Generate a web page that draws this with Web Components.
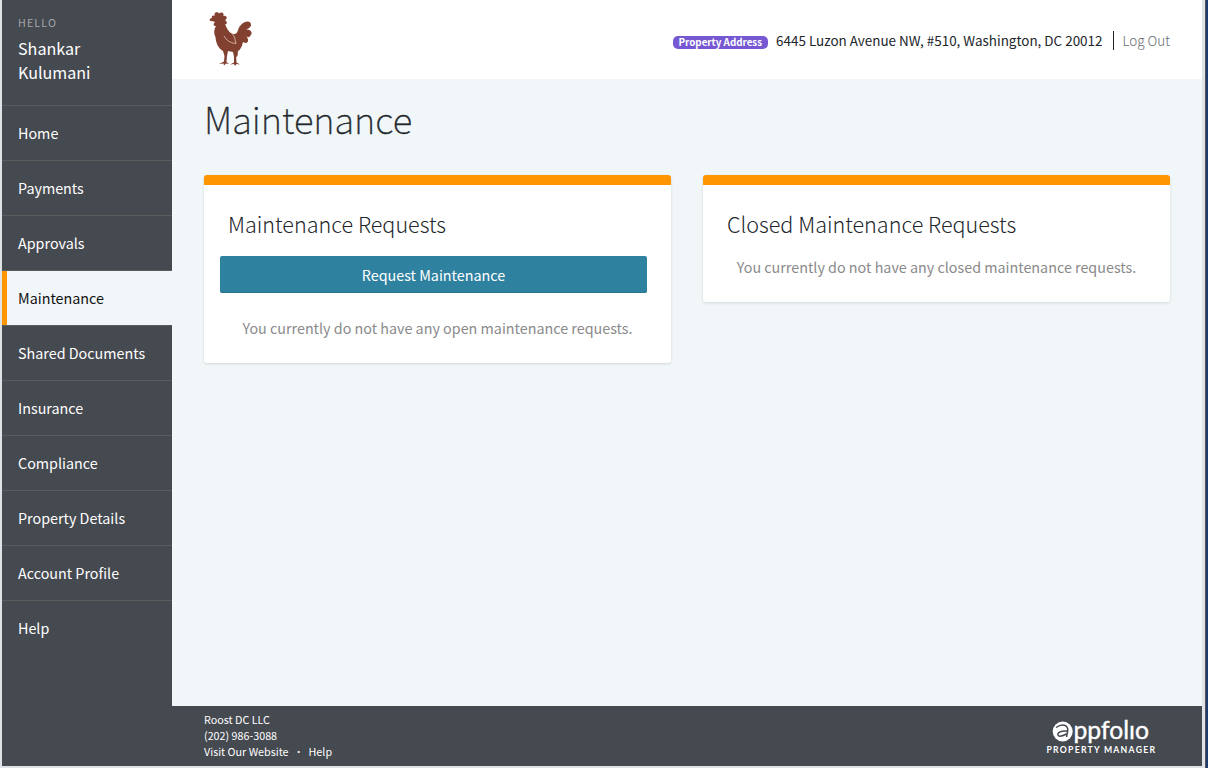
<!DOCTYPE html>
<html lang="en">
<head>
<meta charset="utf-8">
<title>Maintenance</title>
<style>
html,body{margin:0;height:100%}
body{background:#dfe3e6;font-family:"Noto Sans CJK SC","Noto Sans",sans-serif;overflow:hidden;color:#22262b}
</style>
</head>
<body>
<portal-app></portal-app>
<script>
const define = (name, html) => {
  const t = document.createElement('template');
  t.innerHTML = html;
  customElements.define(name, class extends HTMLElement {
    constructor() {
      super();
      this.attachShadow({ mode: 'open' }).appendChild(t.content.cloneNode(true));
    }
  });
};

define('nav-item', `
<style>
:host{display:flex;align-items:center;box-sizing:border-box;height:55px;padding:0 0 0 16px;border-top:1px solid #5b5b5c;color:#fff;font-size:14.33px;line-height:24px;white-space:nowrap}
:host([active]){background:linear-gradient(90deg,#ff9500 5px,#f1f6f9 5px);color:#111}
</style><slot></slot>`);

define('side-nav', `
<style>
:host{display:flex;flex-direction:column;width:170px;background:#454950;color:#fff}
header{height:105px;box-sizing:border-box;padding:15px 16px 0}
small{display:block;font-size:10.75px;line-height:16px;letter-spacing:1.1px;color:#a3a4a5}
.name{font-size:16.12px;line-height:24px;margin-top:5px;width:100px}
</style>
<header><small>HELLO</small><div class="name">Shankar Kulumani</div></header>
<nav>
<nav-item>Home</nav-item><nav-item>Payments</nav-item><nav-item>Approvals</nav-item><nav-item active>Maintenance</nav-item><nav-item>Shared Documents</nav-item><nav-item>Insurance</nav-item><nav-item>Compliance</nav-item><nav-item>Property Details</nav-item><nav-item>Account Profile</nav-item><nav-item>Help</nav-item>
</nav>`);

define('rooster-logo', `
<style>:host{display:block;width:50px;height:60px}svg{display:block}</style>
<svg width="50" height="60" viewBox="0 0 50 60" aria-hidden="true">
<path fill="#824031" d="M7 13C4 14 4 10 7 10C6 8 8 7 10 8C8 4 13 3 14 5.500C17 3 20 6 18 8C22 7 23 11 20 12C23 14 22 17 20 16C22 20 23 24 28 26C34 27 32 20 36 17C39 13 46 12 46 17C46 19 43 21 40 22C45 20 49 25 45 28C44 30 42 29 41 28C45 32 43 37 38 34C37 39 35 42 33 43L32.500 48L31.200 49L31.500 54.500L35 56.500L31.500 56L30 58L29 56L25 56.500L29 54.500L29 49L28 44L23 43L22 48L21.500 54L24 56L21 55.500L19 57.500L18.500 55.500L14 56L19 53.500L19.500 48L18 43C13 40 11 35 10.500 29C9 26 8.500 22 11 18C8 18 8 16 10 14Z"/>
<path d="M19 28C21 32 25 35 31 35.500C30 32 30 29 27 25" fill="none" stroke="#dfc4b8" stroke-width=".8"/>
</svg>`);

define('top-bar', `
<style>
:host{display:flex;align-items:center;height:79px;background:#fff;padding:0 32px 0 34px;box-sizing:border-box;font-size:13.45px;white-space:nowrap}
rooster-logo{margin:-3px auto 0 -1px}
.badge{background:#7558d2;color:#fff;font-weight:700;font-size:9.8px;line-height:12px;border-radius:5px;padding:0 6px 1px;margin:5px 8px 0 0}
.sep{width:1px;height:19px;background:#222;margin:2px 8.500px 0 10.500px}
.out{color:#666b70;font-weight:300}
</style>
<rooster-logo></rooster-logo><span class="badge">Property Address</span><span>6445 Luzon Avenue NW, #510, Washington, DC 20012</span><i class="sep"></i><span class="out">Log Out</span>`);

define('request-card', `
<style>
:host{display:block;box-sizing:border-box;border-top:10px solid #ff9500;border-radius:3px;background:#fff;box-shadow:0 1px 3px rgba(0,0,0,.13);padding:23px 24px 23px 16px}
h2{margin:0 8px;font-size:21.55px;line-height:32px;font-weight:300}
</style><h2><slot name="title"></slot></h2><slot></slot>`);

define('action-button', `
<style>
:host{display:block;box-sizing:border-box;height:37px;margin-top:16px;border-radius:2px;background:#2f81a0;border-bottom:1px solid #287491;color:#fff;text-align:center;font-size:14.35px;line-height:37px}
</style><slot></slot>`);

define('empty-note', `
<style>
:host{display:block;text-align:center;font-size:14.33px;line-height:24px;color:#8a8a8b;padding-left:8px;white-space:nowrap}
</style><slot></slot>`);

define('appfolio-logo', `
<style>:host{display:block;width:120px;height:44px}svg{display:block}</style>
<svg width="120" height="44" viewBox="0 0 120 44" fill="#fff">
<circle cx="18.700" cy="17.500" r="10"/>
<path d="M12 13.500Q18 9.500 22 12Q24.500 14 23.500 18L22.500 23M23 17Q15 16.500 13.800 20Q14 24.500 22.500 20" fill="none" stroke="#454950" stroke-width="1.500"/>
<text x="29.500" y="24.500" font-family="Lato" font-size="24.500" textLength="75.500" lengthAdjust="spacingAndGlyphs" stroke="#fff" stroke-width=".4">ppfolıo</text>
<text x="2.500" y="39" font-family="Lato" font-weight="700" font-size="8.700" textLength="108.500">PROPERTY MANAGER</text>
</svg>`);

define('page-footer', `
<style>
:host{display:flex;justify-content:space-between;box-sizing:border-box;height:60px;background:#454950;color:#fff;padding:6px 38px 0 32px;font-size:10.75px;line-height:16px}
appfolio-logo{margin-top:2px}
.dot{display:inline-block;width:20px;text-align:center;font-weight:300}
</style>
<div><div>Roost DC LLC</div><div>(202) 986-3088</div><div><span>Visit Our Website</span><span class="dot">·</span><span>Help</span></div></div>
<appfolio-logo></appfolio-logo>`);

define('portal-app', `
<style>
:host{display:grid;grid-template-columns:170px 1fr;height:766px;margin:0 6px 0 2px;position:relative}
.col{display:flex;flex-direction:column;background:#f1f6f9}
main{flex:1;padding:0 32px}
h1{margin:15px 0 0;font-size:36.65px;line-height:48px;font-weight:100;-webkit-text-stroke:.45px #22262b}
.cards{display:grid;grid-template-columns:1fr 1fr;gap:32px;align-items:start;margin-top:33px}
.n1{margin-top:23px}.n2{margin-top:15px}
.edge{position:absolute;right:-6px;top:0;width:3px;height:768px;background:#1c3c70;border-left:1px solid #55565a;box-sizing:border-box}
</style>
<side-nav></side-nav>
<div class="col"><top-bar></top-bar>
<main><h1>Maintenance</h1>
<div class="cards">
<request-card><span slot="title">Maintenance Requests</span><action-button>Request Maintenance</action-button><empty-note class="n1">You currently do not have any open maintenance requests.</empty-note></request-card>
<request-card><span slot="title">Closed Maintenance Requests</span><empty-note class="n2">You currently do not have any closed maintenance requests.</empty-note></request-card>
</div></main>
<page-footer></page-footer></div><div class="edge"></div>`);
</script>
</body>
</html>
